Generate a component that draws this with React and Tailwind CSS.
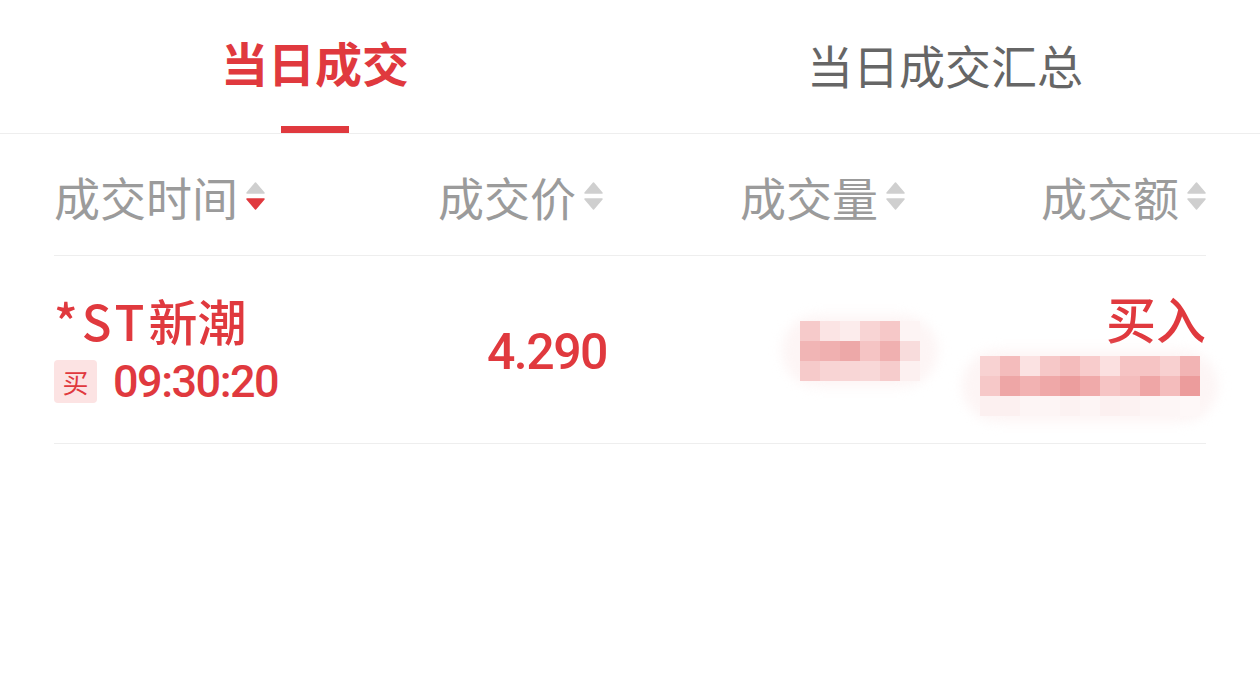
import React from 'react';

const RED = '#e0393e';

function SortIcon({ active }) {
  return (
    <span className="ml-[8px] flex flex-col items-center gap-[4px]">
      <svg width="19" height="12" viewBox="0 0 19 12">
        <path d="M9.5 1 L18 11 L1 11 Z" fill="#cfcfcf" strokeLinejoin="round" stroke="#cfcfcf" strokeWidth="1.5" />
      </svg>
      <svg width="19" height="12" viewBox="0 0 19 12">
        <path d="M1 1 L18 1 L9.5 11 Z" fill={active ? RED : '#cfcfcf'} strokeLinejoin="round" stroke={active ? RED : '#cfcfcf'} strokeWidth="1.5" />
      </svg>
    </span>
  );
}

function Mosaic({ rows }) {
  return (
    <div className="relative">
      <div className="absolute -inset-x-[18px] -inset-y-[6px] rounded-full bg-[#fdf5f5] blur-[6px]" />
      <div className="relative flex flex-col">
        {rows.map((row, i) => (
          <div key={i} className="flex">
            {row.map((c, j) => (
              <div key={j} className="h-[20px] w-[20px]" style={{ backgroundColor: c }} />
            ))}
          </div>
        ))}
      </div>
    </div>
  );
}

const volRows = [
  ['#f6caca', '#fbe4e4', '#fcecec', '#f8d4d4', '#f6c8c8', '#fdf4f4'],
  ['#f1b5b5', '#f0b0b0', '#eda8a8', '#f5c4c4', '#f0b0b0', '#f8dcdc'],
  ['#f6caca', '#f8d4d4', '#f8d6d6', '#f8d8d8', '#f6cccc', '#fcf0f0'],
];

const amtRows = [
  ['#f8d2d2', '#f4bcbc', '#fbe2e2', '#f6c8c8', '#f4bcbc', '#f8cccc', '#fbe0e0', '#f6c4c4', '#f6c4c4', '#f8d0d0', '#f2b4b4'],
  ['#f6c8c8', '#eea6a6', '#f2b2b2', '#efa8a8', '#ec9e9e', '#f0aaaa', '#f6c4c4', '#f4bcbc', '#efa6a6', '#f4bcbc', '#ec9c9c'],
  ['#fcf0f0', '#fcf0f0', '#fdf5f5', '#fdf5f5', '#fcf2f2', '#fdf5f5', '#fcf0f0', '#fcf2f2', '#fdf5f5', '#fdf6f6', '#fef8f8'],
];

export default function App() {
  const cjk = { fontFamily: '"Noto Sans CJK SC", "Noto Sans", sans-serif' };
  const num = { fontFamily: 'Roboto, "Noto Sans CJK SC", sans-serif' };

  return (
    <div className="h-[700px] w-[1260px] bg-white" style={cjk}>
      {/* Tabs */}
      <div className="flex h-[134px] border-b border-[#eeeeee]">
        <div className="relative flex flex-1 items-start justify-center pt-[32px]">
          <span className="text-[47px] font-bold leading-[60px] text-[#e0393e]">当日成交</span>
          <span className="absolute bottom-0 left-[281px] h-[7px] w-[68px] bg-[#e0393e]" />
        </div>
        <div className="flex flex-1 items-start justify-center pt-[34px]">
          <span className="text-[46px] leading-[60px] text-[#666666]">当日成交汇总</span>
        </div>
      </div>

      <div className="px-[54px]">
        {/* Header */}
        <div className="grid h-[122px] grid-cols-[247px_302px_302px_301px] items-center border-b border-[#eeeeee] text-[46px] text-[#9b9b9b]">
          <div className="flex items-center pt-[2px]">
            <span className="leading-[60px]">成交时间</span>
            <SortIcon active />
          </div>
          <div className="flex items-center justify-end pt-[2px]">
            <span className="leading-[60px]">成交价</span>
            <SortIcon />
          </div>
          <div className="flex items-center justify-end pt-[2px]">
            <span className="leading-[60px]">成交量</span>
            <SortIcon />
          </div>
          <div className="flex items-center justify-end pt-[2px]">
            <span className="leading-[60px]">成交额</span>
            <SortIcon />
          </div>
        </div>

        {/* Row */}
        <div className="grid h-[188px] grid-cols-[247px_302px_302px_301px] items-center border-b border-[#eeeeee]">
          <div className="flex flex-col gap-[8px] pb-[2px]">
            <span className="whitespace-nowrap text-[49px] font-medium leading-[58px] text-[#e0393e]">
              <span className="tracking-[4px]">*ST</span>新潮
            </span>
            <div className="flex items-center">
              <span className="flex h-[43px] w-[43px] items-center justify-center rounded-[4px] bg-[#fce3e3] text-[26px] text-[#e0393e]">买</span>
              <span className="ml-[16px] text-[45px] font-medium leading-[50px] tracking-[-1.5px] text-[#e0393e]" style={num}>09:30:20</span>
            </div>
          </div>
          <div className="-mr-[4px] flex justify-end pt-[4px]">
            <span className="text-[50px] font-medium leading-[56px] tracking-[-1.5px] text-[#e0393e]" style={num}>4.290</span>
          </div>
          <div className="-mr-[15px] flex justify-end pt-[2px]">
            <Mosaic rows={volRows} />
          </div>
          <div className="flex flex-col items-end pt-[4px]">
            <span className="text-[50px] font-medium leading-[58px] text-[#e0393e]">买入</span>
            <div className="mr-[6px] mt-[10px]">
              <Mosaic rows={amtRows} />
            </div>
          </div>
        </div>
      </div>
    </div>
  );
}
